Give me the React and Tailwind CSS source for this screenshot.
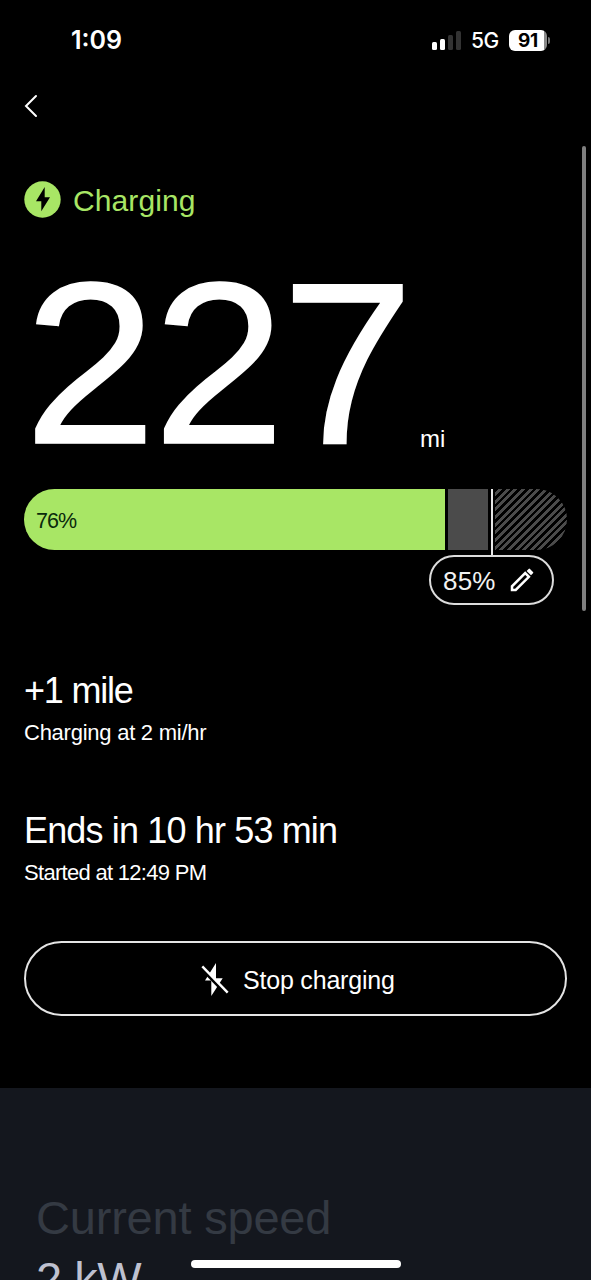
import React from "react";

function StatusBar() {
  return (
    <header className="flex h-20 shrink-0 items-center justify-between pl-[71px] pr-[41px] font-['Inter',sans-serif]">
      <span className="text-[25px] font-semibold leading-none">1:09</span>
      <div className="flex items-center">
        <div className="flex h-[19px] items-end gap-[3px]">
          <i className="h-[8px] w-[5px] rounded-[1.5px] bg-white" />
          <i className="h-[11px] w-[5px] rounded-[1.5px] bg-white" />
          <i className="h-[15px] w-[5px] rounded-[1.5px] bg-[#333]" />
          <i className="h-[19px] w-[5px] rounded-[1.5px] bg-[#333]" />
        </div>
        <span className="ml-[10px] w-[28px] text-[21px] font-medium leading-none tracking-[-0.4px]">5G</span>
        <div className="ml-[10px] flex h-[21px] w-[38px] items-center justify-center rounded-[6px] bg-linear-to-r from-white from-91% to-[#8a8a8a] to-91% text-[19px] font-bold leading-none tracking-[-0.3px] text-black">
          91
        </div>
        <i className="ml-px h-[7px] w-[2px] rounded-r-full bg-[#777]" />
      </div>
    </header>
  );
}

function ChargeBar() {
  return (
    <div className="relative mt-[9px] h-[61px]">
      <div className="flex h-full overflow-hidden rounded-full">
        <div className="flex w-[421px] items-center bg-[#a8e665] pl-[12px] pt-[4px] text-[21.5px] leading-none tracking-[-0.9px] text-[#0a2a0c]">
          76%
        </div>
        <div className="ml-[3px] w-[40px] bg-[#4b4b4b]" />
        <div className="ml-[7px] flex-1 bg-[repeating-linear-gradient(135deg,#000_0px,#000_2.6px,#4b4b4b_2.6px,#4b4b4b_5.4px)]" />
      </div>
      <i className="absolute left-[467px] top-0 h-[67px] w-[1.5px] bg-[#e8e8e8]" />
      <button className="absolute left-[405px] top-[66px] flex h-[50px] w-[125px] items-center rounded-full border-2 border-[#dcdcdc] bg-black pl-[12px] text-[26px] leading-none tracking-[0.2px] text-[#f2f2f2]">
        <span className="pt-[2px]">85%</span>
        <svg className="ml-[13px]" width="26" height="26" viewBox="0 0 26 26">
          <path d="M3 23V19.300L16.200 6.100L19.900 9.800L6.700 23Z" fill="none" stroke="#fff" strokeWidth="2.500" />
          <path d="M17.600 3.900L19.600 1.900Q20.300 1.200 21 1.900L24 4.900Q24.700 5.600 24 6.300L22 8.300Z" fill="#fff" />
        </svg>
      </button>
    </div>
  );
}

export default function App() {
  return (
    <div className="relative flex h-[1280px] w-[591px] flex-col overflow-hidden bg-black font-['Liberation_Sans',Arial,sans-serif] text-white">
      <StatusBar />
      <main className="flex h-[1008px] shrink-0 flex-col px-[24px]">
        <nav className="flex h-[52px] items-center">
          <svg width="14" height="24" viewBox="0 0 14 24">
            <path d="M12 2L2 12L12 22" fill="none" stroke="#fff" strokeWidth="2" strokeLinecap="round" />
          </svg>
        </nav>
        <div className="mt-[48px] flex h-[38px] items-center text-[30px] leading-[38px] text-[#a8e665]">
          <svg className="mr-[12px]" width="37" height="37" viewBox="0 0 37 37">
            <circle cx="18.500" cy="18.500" r="18.200" fill="#a8e665" />
            <path d="M20.700 6L12 20.300H17.300V30.200L26 16.200H20.700Z" fill="#000" />
          </svg>
          <span className="pt-[4px] tracking-[0.1px]">Charging</span>
        </div>
        <div className="mt-[30px] flex h-[232px] items-baseline">
          <span className="w-[396px] origin-left scale-x-[1.035] text-[230px] leading-[232px] tracking-[-3.5px] [-webkit-text-stroke:1.5px_white]">227</span>
          <span className="relative top-[4px] text-[24px] leading-none">mi</span>
        </div>
        <ChargeBar />
        <section className="mt-[119px]">
          <h2 className="text-[36px] leading-[44px] tracking-[-1.2px]">+1 mile</h2>
          <p className="mt-[7px] text-[22px] leading-[26px] tracking-[-0.25px]">Charging at 2 mi/hr</p>
        </section>
        <section className="mt-[63px]">
          <h2 className="text-[36px] leading-[44px] tracking-[-0.85px]">Ends in 10 hr 53 min</h2>
          <p className="mt-[7px] text-[22px] leading-[26px] tracking-[-0.7px]">Started at 12:49 PM</p>
        </section>
        <button className="mt-[55px] flex h-[75px] items-center rounded-full border-2 border-[#e4e4e4] pl-[174px] text-[25px] leading-none tracking-[-0.200px]">
          <svg width="30" height="36" viewBox="200 960 30 36">
            <path d="M216 962L205 979.500H211.300V995L222.700 977.300H216Z" fill="#fff" />
            <path d="M200 966L226 993" stroke="#000" strokeWidth="3" />
            <path d="M202.300 965.300L227.700 991.700" stroke="#fff" strokeWidth="2.400" />
          </svg>
          <span className="ml-[13px] pt-[3px]">Stop charging</span>
        </button>
      </main>
      <section className="flex-1 bg-[#14171e] pl-[36px] pt-[102px] text-[47px] leading-[56px]">
        <h3 className="tracking-[-0.200px] text-[#343a43]">Current speed</h3>
        <p className="mt-[5px] tracking-[-0.500px] text-[#bfc1d0]">2 kW</p>
      </section>
      <i className="absolute left-[582px] top-[146px] h-[465px] w-[4px] rounded-full bg-[#7f7f7f]" />
      <i className="absolute left-[191px] top-[1260px] h-[8px] w-[210px] rounded-full bg-white" />
    </div>
  );
}
